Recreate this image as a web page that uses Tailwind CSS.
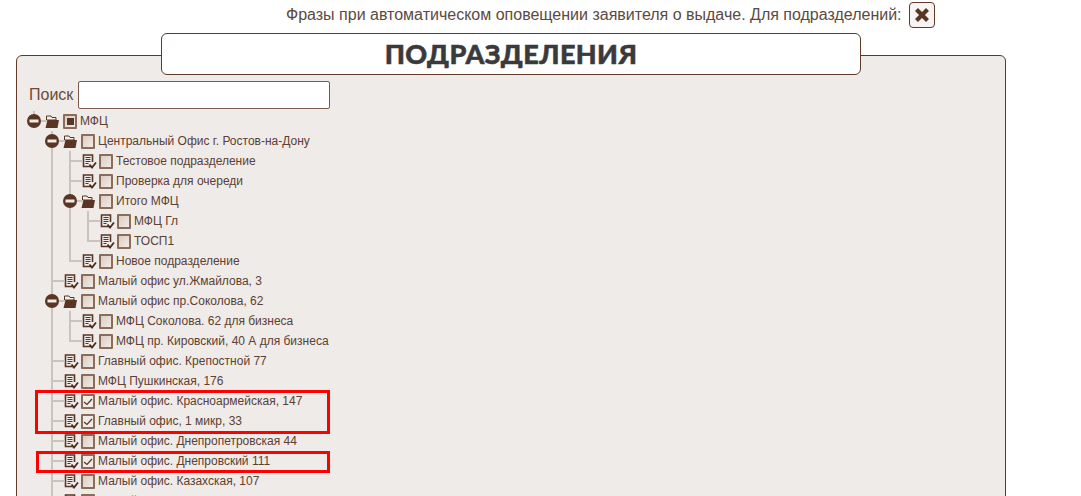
<!DOCTYPE html>
<html lang="ru">
<head>
  <meta charset="UTF-8" />
  <title>Подразделения</title>
  <script src="https://cdn.jsdelivr.net/npm/@tailwindcss/browser@4"></script>
</head>
<body class="bg-white h-[496px] overflow-hidden font-['Liberation_Sans',sans-serif] text-[#5f3a28]">
  <!-- Header phrase -->
  <div class="h-[33px] pl-[286px] pt-[2px] flex items-start">
    <span class="text-[16px] leading-[26px] text-[#5c4a42]">Фразы при автоматическом оповещении заявителя о выдаче. Для подразделений:</span>
    <button class="ml-[7px] w-[26px] h-[26px] bg-[#f7f4f2] border border-[#5f3a28] rounded-[4px] flex items-center justify-center">
      <svg width="16" height="16" viewBox="0 0 16 16"><path d="M2.5 2.5 L13.5 13.5 M13.5 2.5 L2.5 13.5" stroke="#5a3524" stroke-width="4.2" /></svg>
    </button>
  </div>

  <div class="relative ml-[16px] mr-[75px] mt-[22px] h-[500px] bg-[#efebe8] border border-[#5f3a28] rounded-t-[6px]">
    <!-- Title -->
    <div class="absolute left-[144px] top-[-23px] w-[700px] h-[42px] pb-[2px] bg-white border border-[#5f3a28] rounded-[6px] flex items-center justify-center">
      <h1 class="font-['Lato',sans-serif] font-black text-[27px] leading-none text-[#3a3a3c] tracking-[0.4px] [-webkit-text-stroke:0.5px_#3a3a3c]">ПОДРАЗДЕЛЕНИЯ</h1>
    </div>

    <!-- Search -->
    <div class="flex items-center pl-[12px] pt-[23px] h-[55px]">
      <label class="text-[16px] text-[#6b4a38] mr-[5px]">Поиск</label>
      <input type="text" class="w-[252px] h-[28px] bg-white border border-[#7a5a48] rounded-[2px]" />
    </div>

    <!-- Tree -->
    <div id="tree" class="pl-[8px]"></div>

    <!-- Red highlights -->
    <div class="absolute left-[18px] top-[334px] w-[295px] h-[44px] border-[3px] border-[#ff0000]"></div>
    <div class="absolute left-[19px] top-[395px] w-[294px] h-[22px] border-[3px] border-[#ff0000]"></div>
  </div>

  <script>
    const minus = `<svg width="14" height="14" viewBox="0 0 14 14" class="shrink-0"><circle cx="7" cy="7" r="7" fill="#5a3524"/><rect x="2.5" y="5.5" width="9" height="3" fill="#efebe8"/></svg>`;
    const folder = `<svg width="14" height="13" viewBox="0 0 14 13" class="shrink-0"><path d="M1.5 5 V1 H6 L7 2.5 H11 V5 Z" fill="#f3eeea" stroke="#5a3524" stroke-width="1"/><path d="M2.5 5 H14 L12.5 13 H0.5 Z" fill="#5a3524"/></svg>`;
    const doc = `<svg width="15" height="15" viewBox="0 0 15 15" class="shrink-0 ml-[3px]"><path d="M9.5 12.5 H1.5 V1 H10.5 V8" fill="none" stroke="#5a3524" stroke-width="1.6"/><path d="M3.5 3.5 H8.5 M3.5 5.5 H8.5 M3.5 7.5 H8.5 M3.5 9.5 H6.5" stroke="#5a3524" stroke-width="1.1"/><path d="M7.5 10.5 L10 13.5 L14 8.5" fill="none" stroke="#4a2c1c" stroke-width="1.8"/></svg>`;

    function checkbox(state) {
      let inner = '';
      if (state === 'some') inner = '<span class="w-[7px] h-[7px] bg-[#5a3524]"></span>';
      if (state === 'on') inner = '<svg width="10" height="8" viewBox="0 0 10 8"><path d="M1 4 L4 6.5 L9 1" fill="none" stroke="#5a3524" stroke-width="1.2"/></svg>';
      const bg = state === 'on' ? 'bg-[#efebe8]' : 'bg-gradient-to-br from-[#dccdc2] to-[#f2ebe6]';
      return `<span class="shrink-0 w-[14px] h-[15px] mx-[2px] mt-[1px] border-2 border-[#8a6c5c] rounded-[1px] flex items-center justify-center ${bg}">${inner}</span>`;
    }

    const vline = '<span class="absolute left-[8px] top-0 bottom-0 w-[2px] bg-[#cdc3bd]"></span>';
    const guide = `<span class="shrink-0 w-[18px] h-full relative">${vline}</span>`;
    const blank = '<span class="shrink-0 w-[18px] h-full"></span>';
    const elbow = `<span class="shrink-0 w-[18px] h-full relative">${vline}<span class="absolute left-[8px] top-[9px] w-[14px] h-[2px] bg-[#cdc3bd]"></span></span>`;
    const elbowLast = '<span class="shrink-0 w-[18px] h-full relative"><span class="absolute left-[8px] top-0 h-[11px] w-[2px] bg-[#cdc3bd]"></span><span class="absolute left-[8px] top-[9px] w-[14px] h-[2px] bg-[#cdc3bd]"></span></span>';
    const opener = `<span class="shrink-0 w-[18px] h-full relative flex items-center justify-center">${vline}<span class="absolute left-[16px] top-[9px] w-[6px] h-[2px] bg-[#cdc3bd]"></span><span class="relative">${minus}</span></span>`;
    const openerRoot = `<span class="shrink-0 w-[18px] h-full relative flex items-center justify-center"><span class="absolute left-[8px] top-0 h-[10px] w-[2px] bg-[#cdc3bd]"></span><span class="absolute left-[16px] top-[9px] w-[6px] h-[2px] bg-[#cdc3bd]"></span><span class="relative">${minus}</span></span>`;

    // [prefix cells, toggle cell, icon, title, checkbox state]
    const rows = [
      [[], openerRoot, folder, 'МФЦ', 'some'],
      [[blank], opener, folder, 'Центральный Офис г. Ростов-на-Дону', ''],
      [[blank, guide], elbow, doc, 'Тестовое подразделение', ''],
      [[blank, guide], elbow, doc, 'Проверка для очереди', ''],
      [[blank, guide], opener, folder, 'Итого МФЦ', ''],
      [[blank, guide, guide], elbow, doc, 'МФЦ Гл', ''],
      [[blank, guide, guide], elbowLast, doc, 'ТОСП1', ''],
      [[blank, guide], elbowLast, doc, 'Новое подразделение', ''],
      [[blank], elbow, doc, 'Малый офис ул.Жмайлова, 3', ''],
      [[blank], opener, folder, 'Малый офис пр.Соколова, 62', ''],
      [[blank, guide], elbow, doc, 'МФЦ Соколова. 62 для бизнеса', ''],
      [[blank, guide], elbowLast, doc, 'МФЦ пр. Кировский, 40 А для бизнеса', ''],
      [[blank], elbow, doc, 'Главный офис. Крепостной 77', ''],
      [[blank], elbow, doc, 'МФЦ Пушкинская, 176', ''],
      [[blank], elbow, doc, 'Малый офис. Красноармейская, 147', 'on'],
      [[blank], elbow, doc, 'Главный офис, 1 микр, 33', 'on'],
      [[blank], elbow, doc, 'Малый офис. Днепропетровская 44', ''],
      [[blank], elbow, doc, 'Малый офис. Днепровский 111', 'on'],
      [[blank], elbow, doc, 'Малый офис. Казахская, 107', ''],
      [[blank], elbow, doc, 'Малый офис. Таганрогская, 6', ''],
    ];

    document.getElementById('tree').innerHTML = rows.map(([cells, toggle, icon, title, state]) => {
      return `<div class="flex items-center h-5">
        ${cells.join('')}${toggle}
        <span class="shrink-0 w-[18px] h-full flex items-center justify-center">${icon}</span>
        ${checkbox(state)}
        <span class="ml-[1px] text-[12px] leading-5 whitespace-nowrap text-[#5c4034]">${title}</span>
      </div>`;
    }).join('');
  </script>
</body>
</html>
